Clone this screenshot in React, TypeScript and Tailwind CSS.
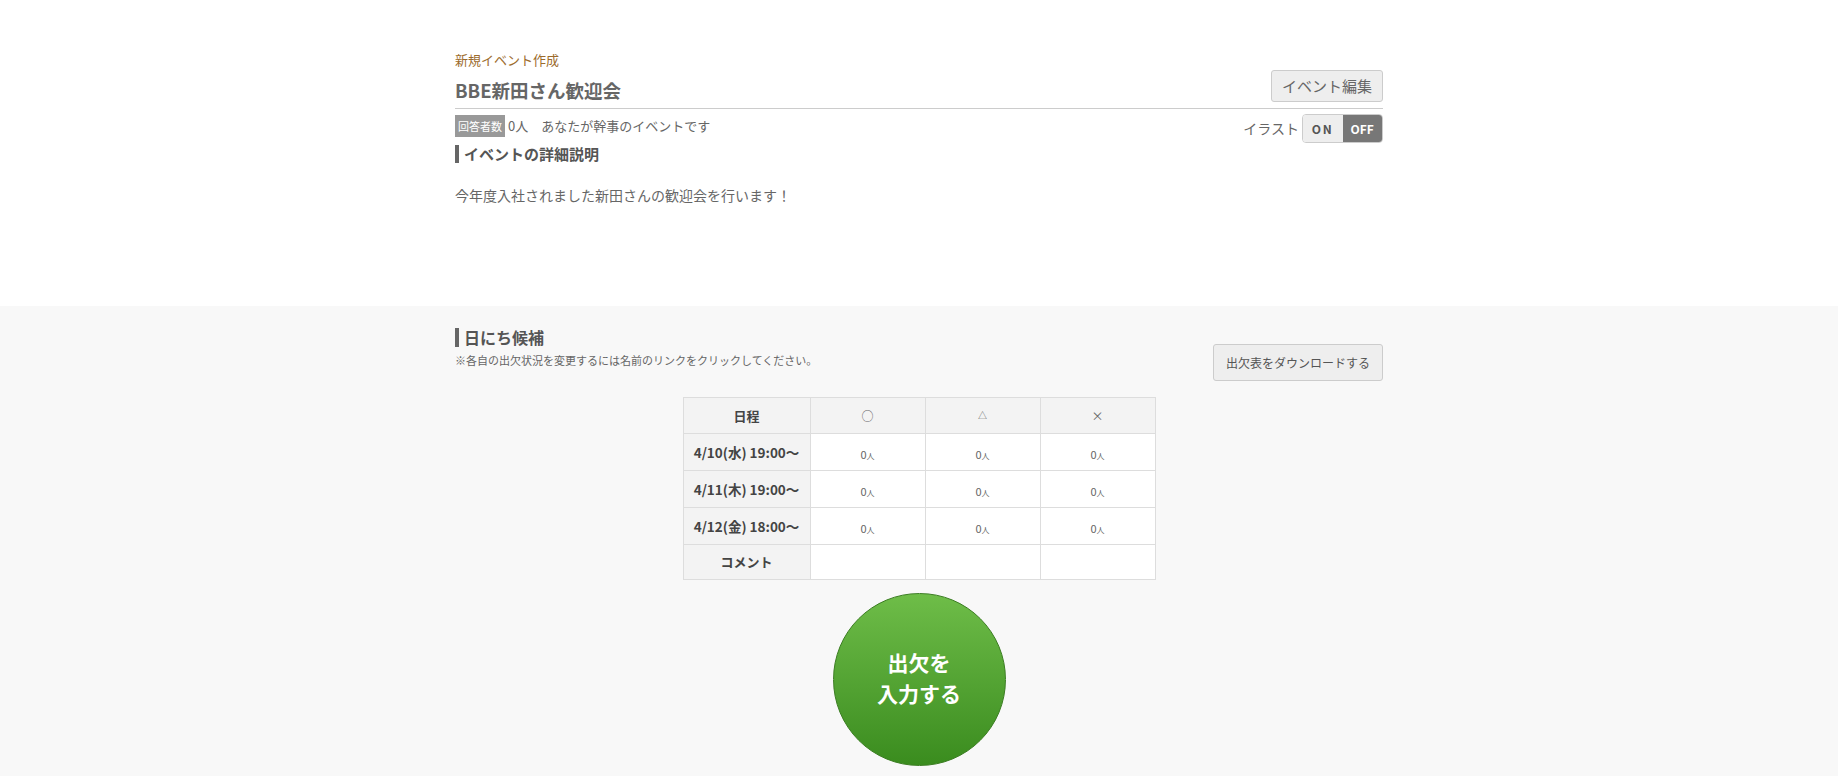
const rows = [
  { date: "4/10(水) 19:00〜", counts: [0, 0, 0] },
  { date: "4/11(木) 19:00〜", counts: [0, 0, 0] },
  { date: "4/12(金) 18:00〜", counts: [0, 0, 0] },
];

function Count({ n }: { n: number }) {
  return (
    <span className="text-[11px] text-[#666]">
      {n}
      <span className="text-[8px]">人</span>
    </span>
  );
}

export default function App() {
  return (
    <div className="min-h-[776px] bg-[#f8f8f8] font-['Noto_Sans_CJK_JP',sans-serif] text-[#666]">
      <section className="bg-white h-[306px]">
        <div className="w-[928px] mx-auto pt-[50px]">
          <p className="text-[13px] leading-[20px] text-[#9c6b2c]">新規イベント作成</p>
          <div className="flex justify-between items-start pb-[6px] border-b border-[#ccc]">
            <h1 className="mt-[8px] text-[18.5px] leading-[24px] font-bold text-[#666]">BBE新田さん歓迎会</h1>
            <button className="h-[32px] px-[10px] rounded-[3px] border border-[#ccc] bg-[#eee] text-[15px] text-[#666]">
              イベント編集
            </button>
          </div>
          <div className="flex justify-between items-start mt-[5px]">
            <div className="flex items-center mt-[1px]">
              <span className="h-[22px] px-[3px] bg-[#999] text-white text-[11px] leading-[22px]">回答者数</span>
              <span className="ml-[3px] text-[13px]">0人　あなたが幹事のイベントです</span>
            </div>
            <div className="flex items-center">
              <span className="text-[14px] mr-[3px]">イラスト</span>
              <div className="flex h-[29px] w-[81px] rounded-[4px] overflow-hidden border border-[#ccc]">
                <span className="flex-1 flex items-center justify-center bg-[#eee] text-[12px] font-bold tracking-[2px] text-[#555]">ON</span>
                <span className="flex-1 flex items-center justify-center bg-[#777] text-[12px] font-bold text-white">OFF</span>
              </div>
            </div>
          </div>
          <h2 className="mt-[2px] h-[18px] border-l-4 border-[#666] pl-[5px] text-[15px] leading-[18px] font-bold text-[#555]">
            イベントの詳細説明
          </h2>
          <p className="mt-[22px] text-[14px] leading-[20px]">今年度入社されました新田さんの歓迎会を行います！</p>
        </div>
      </section>

      <section className="w-[928px] mx-auto pt-[22px] pb-[20px]">
        <div className="flex justify-between items-start">
          <div>
            <h2 className="h-[19px] border-l-4 border-[#666] pl-[5px] text-[16px] leading-[19px] font-bold text-[#555]">
              日にち候補
            </h2>
            <p className="mt-[6px] text-[11px] leading-[14px]">※各自の出欠状況を変更するには名前のリンクをクリックしてください。</p>
          </div>
          <button className="mt-[16px] h-[37px] w-[170px] rounded-[3px] border border-[#ccc] bg-[#eee] text-[12px] text-[#555]">
            出欠表をダウンロードする
          </button>
        </div>

        <table className="mx-auto mt-[16px] border-collapse border border-[#ddd] text-center">
          <thead>
            <tr className="bg-[#f3f3f3]">
              <th className="w-[127px] h-[36px] border border-[#ddd] text-[13px] font-bold text-[#444]">日程</th>
              <th className="w-[115px] border border-[#ddd] text-[12px] font-normal text-[#666]">○</th>
              <th className="w-[115px] border border-[#ddd] text-[9px] font-normal text-[#666]">△</th>
              <th className="w-[115px] border border-[#ddd] text-[12px] font-normal text-[#666]">×</th>
            </tr>
          </thead>
          <tbody>
            {rows.map((r) => (
              <tr key={r.date}>
                <td className="h-[37px] bg-[#f3f3f3] border border-[#ddd] text-[13.5px] font-bold text-[#444]">{r.date}</td>
                {r.counts.map((c, i) => (
                  <td key={i} className="bg-white border border-[#ddd]">
                    <Count n={c} />
                  </td>
                ))}
              </tr>
            ))}
            <tr>
              <td className="h-[35px] bg-[#f3f3f3] border border-[#ddd] text-[13px] font-bold text-[#444]">コメント</td>
              <td className="bg-white border border-[#ddd]"></td>
              <td className="bg-white border border-[#ddd]"></td>
              <td className="bg-white border border-[#ddd]"></td>
            </tr>
          </tbody>
        </table>

        <div className="flex justify-center mt-[13px]">
          <button className="w-[173px] h-[173px] pb-[4px] rounded-full border border-[#3b7d22] bg-gradient-to-b from-[#6ebd48] to-[#3a8c1e] text-white text-[21px] font-bold flex flex-col items-center justify-center">
            <span className="leading-[31px]">出欠を</span>
            <span className="leading-[31px]">入力する</span>
          </button>
        </div>
      </section>
    </div>
  );
}
